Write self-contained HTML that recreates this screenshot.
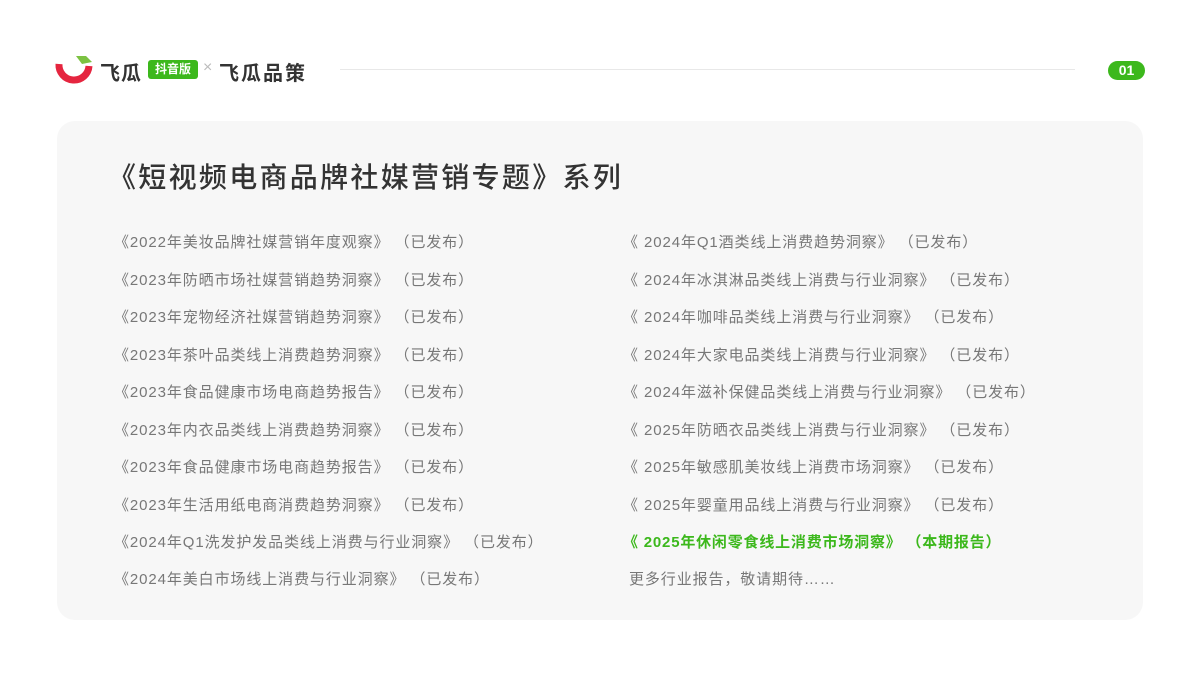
<!DOCTYPE html>
<html><head><meta charset="utf-8"><style>
body{margin:0;width:1200px;height:675px;background:#fff;position:relative;font-family:"Liberation Sans","Noto Sans CJK SC",sans-serif;overflow:hidden}
.a{position:absolute;white-space:nowrap}
.card{position:absolute;left:57px;top:121px;width:1086px;height:499px;background:#f7f7f7;border-radius:18px}
.r{position:absolute;font-size:15px;color:#777;white-space:nowrap;line-height:20px;letter-spacing:0.9px}
</style></head><body>
<svg class="a" style="left:54px;top:52px" width="42" height="34" viewBox="0 0 42 34">
<path d="M5 12 A14 14 0 0 0 35 14" fill="none" stroke="#e5253f" stroke-width="7"/>
<path d="M22 4 L32 4 L38 10 L28 12 Z" fill="#7cc242"/>
</svg>
<div class="a" style="left:100px;top:57px;font-size:20px;font-weight:bold;color:#333;letter-spacing:1px">飞瓜</div>
<div class="a" style="left:148px;top:60px;width:50px;height:19px;background:#3cb81c;border-radius:3px;color:#fff;font-size:12px;font-weight:bold;text-align:center;line-height:19px">抖音版</div>
<div class="a" style="left:203px;top:59px;font-size:16px;color:#bbb">×</div>
<div class="a" style="left:219px;top:57px;font-size:20px;font-weight:bold;color:#333;letter-spacing:2px">飞瓜品策</div>
<div class="a" style="left:340px;top:69px;width:735px;height:1px;background:#e8e8e8"></div>
<div class="a" style="left:1108px;top:61px;width:37px;height:19px;background:#3cb81c;border-radius:10px;color:#fff;font-size:14px;font-weight:bold;text-align:center;line-height:19px">01</div>
<div class="card"></div>
<div class="a" style="left:108px;top:156px;font-size:28px;color:#333;font-weight:500;letter-spacing:2.3px">《短视频电商品牌社媒营销专题》系列</div>
<div class="r" style="left:114px;top:233px">《2022年美妆品牌社媒营销年度观察》 （已发布）</div>
<div class="r" style="left:114px;top:271px">《2023年防晒市场社媒营销趋势洞察》 （已发布）</div>
<div class="r" style="left:114px;top:308px">《2023年宠物经济社媒营销趋势洞察》 （已发布）</div>
<div class="r" style="left:114px;top:346px">《2023年茶叶品类线上消费趋势洞察》 （已发布）</div>
<div class="r" style="left:114px;top:383px">《2023年食品健康市场电商趋势报告》 （已发布）</div>
<div class="r" style="left:114px;top:421px">《2023年内衣品类线上消费趋势洞察》 （已发布）</div>
<div class="r" style="left:114px;top:458px">《2023年食品健康市场电商趋势报告》 （已发布）</div>
<div class="r" style="left:114px;top:496px">《2023年生活用纸电商消费趋势洞察》 （已发布）</div>
<div class="r" style="left:114px;top:533px">《2024年Q1洗发护发品类线上消费与行业洞察》 （已发布）</div>
<div class="r" style="left:114px;top:570px">《2024年美白市场线上消费与行业洞察》 （已发布）</div>
<div class="r" style="left:623px;top:233px">《 2024年Q1酒类线上消费趋势洞察》 （已发布）</div>
<div class="r" style="left:623px;top:271px">《 2024年冰淇淋品类线上消费与行业洞察》 （已发布）</div>
<div class="r" style="left:623px;top:308px">《 2024年咖啡品类线上消费与行业洞察》 （已发布）</div>
<div class="r" style="left:623px;top:346px">《 2024年大家电品类线上消费与行业洞察》 （已发布）</div>
<div class="r" style="left:623px;top:383px">《 2024年滋补保健品类线上消费与行业洞察》 （已发布）</div>
<div class="r" style="left:623px;top:421px">《 2025年防晒衣品类线上消费与行业洞察》 （已发布）</div>
<div class="r" style="left:623px;top:458px">《 2025年敏感肌美妆线上消费市场洞察》 （已发布）</div>
<div class="r" style="left:623px;top:496px">《 2025年婴童用品线上消费与行业洞察》 （已发布）</div>
<div class="r" style="left:623px;top:533px;color:#3cb81c;font-weight:bold;letter-spacing:0.8px">《 2025年休闲零食线上消费市场洞察》 （本期报告）</div>
<div class="r" style="left:629px;top:570px">更多行业报告，敬请期待……</div>
</body></html>
